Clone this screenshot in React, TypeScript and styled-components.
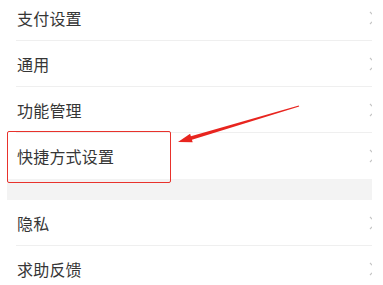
import styled, { createGlobalStyle } from "styled-components";

const GlobalStyle = createGlobalStyle`
  html, body {
    margin: 0;
    padding: 0;
    background: #ffffff;
  }
  body {
    font-family: "Noto Sans CJK SC", "Noto Sans", sans-serif;
  }
`;

const Frame = styled.div`
  position: relative;
  width: 383px;
  height: 285px;
  overflow: hidden;
  background: #ffffff;
`;

const Screen = styled.div`
  width: 365px;
  margin-left: 7px;
  margin-top: -5px;
  overflow: hidden;
  background: #ffffff;
`;

const Group = styled.div`
  display: flex;
  flex-direction: column;
  padding-left: 9px;
`;

const Row = styled.div<{ $last?: boolean }>`
  display: flex;
  align-items: center;
  justify-content: space-between;
  height: 46px;
  border-bottom: ${(p) => (p.$last ? "none" : "1px solid #efefef")};
  box-sizing: border-box;
`;

const Label = styled.span`
  padding-left: 1px;
  font-size: 16px;
  color: #363636;
  letter-spacing: 0.2px;
`;

const Chevron = styled.svg`
  width: 8px;
  height: 14px;
  margin-right: -5px;
  flex-shrink: 0;
`;

const Divider = styled.div`
  height: 21px;
  background: #f3f3f3;
`;

const Highlight = styled.div`
  position: absolute;
  left: 7px;
  top: 131px;
  width: 164px;
  height: 52px;
  box-sizing: border-box;
  border: 1.5px solid #e8322c;
  border-radius: 2px;
`;

const Arrow = styled.svg`
  position: absolute;
  left: 0;
  top: 0;
  width: 383px;
  height: 285px;
  pointer-events: none;
`;

function Item({ label, last }: { label: string; last?: boolean }) {
  return (
    <Row $last={last}>
      <Label>{label}</Label>
      <Chevron viewBox="0 0 8 14">
        <path d="M1 1 L7 7 L1 13" fill="none" stroke="#c4c4c4" strokeWidth="1.2" />
      </Chevron>
    </Row>
  );
}

export default function App() {
  return (
    <Frame>
      <GlobalStyle />
      <Screen>
        <Group>
          <Item label="支付设置" />
          <Item label="通用" />
          <Item label="功能管理" />
          <Item label="快捷方式设置" last />
        </Group>
        <Divider />
        <Group>
          <Item label="隐私" />
          <Item label="求助反馈" last />
        </Group>
      </Screen>
      <Highlight />
      <Arrow viewBox="0 0 383 285">
        <polygon
          points="298.8,105.4 299.2,106.6 191.9,139.7 192.7,142.3 178,142 190.1,133.7 190.9,136.3"
          fill="#e8251f"
        />
      </Arrow>
    </Frame>
  );
}
